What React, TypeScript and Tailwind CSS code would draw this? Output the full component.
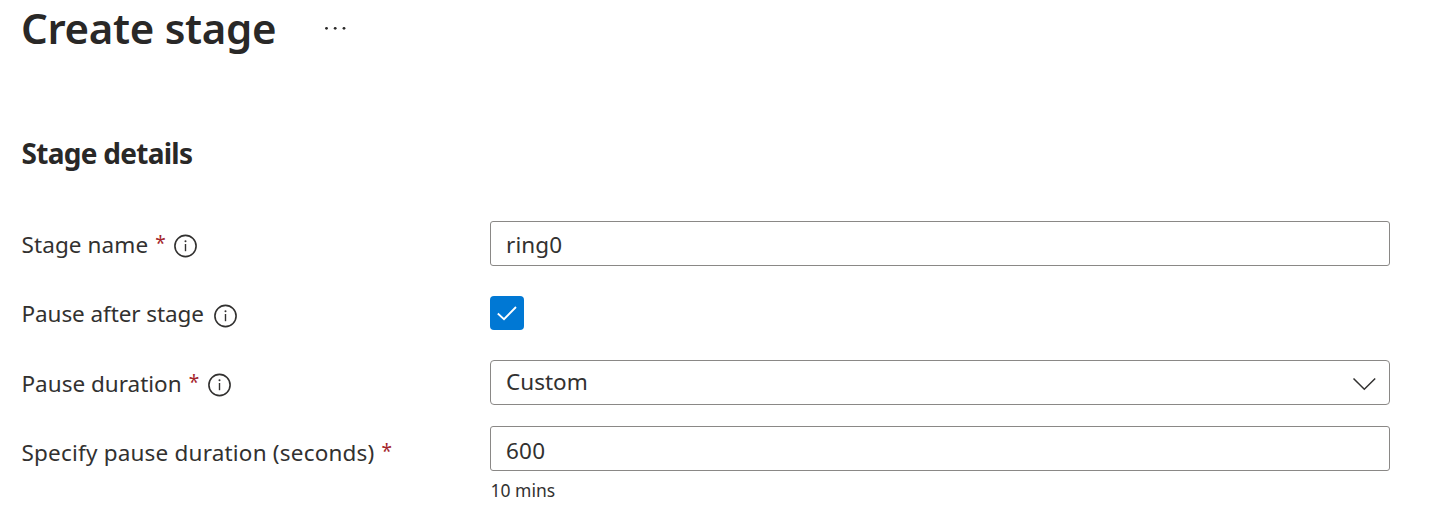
import React from "react";

function Info() {
  return (
    <svg width="24" height="24" viewBox="0 0 24 24" fill="none" className="mt-[3px] shrink-0">
      <circle cx="11.5" cy="12" r="10.6" stroke="#323130" strokeWidth="1.6" />
      <path d="M11.5 10V17.2" stroke="#323130" strokeWidth="1.4" />
      <circle cx="11.5" cy="7.3" r="1" fill="#323130" />
    </svg>
  );
}

type RowProps = {
  label: string;
  labelClass: string;
  rowClass: string;
  cellClass?: string;
  required?: boolean;
  info?: boolean;
  children: React.ReactNode;
};

function Row({ label, labelClass, rowClass, cellClass = "pt-[2px]", required, info, children }: RowProps) {
  return (
    <div className={`flex ${rowClass}`}>
      <div className={`-ml-[0.5px] flex w-[468.5px] shrink-0 items-center whitespace-nowrap ${cellClass}`}>
        <span className={labelClass}>{label}</span>
        {required && <span className="mr-[9px] -mt-[3px] w-[10px] text-[19px] text-[#a4262c]">*</span>}
        {info && <Info />}
      </div>
      {children}
    </div>
  );
}

export default function App() {
  return (
    <main className="h-[532px] overflow-hidden bg-white pl-[22px] font-['Noto_Sans',sans-serif] text-[22.5px] leading-[34px] text-[#323130]">
      <header className="flex h-[135px] items-start text-[#292827]">
        <h1 className="-ml-[1px] w-[302px] text-[42px] leading-[56px] font-semibold tracking-[-0.32px]">Create stage</h1>
        <svg width="24" height="4" viewBox="0 0 24 4" fill="#292827" className="mt-[26px]">
          <circle cx="3.5" cy="2.3" r="1.4" />
          <circle cx="12.2" cy="2.3" r="1.4" />
          <circle cx="21" cy="2.3" r="1.4" />
        </svg>
      </header>
      <h2 className="-ml-[0.5px] mb-[50px] text-[28px] leading-[36px] font-bold tracking-[-0.72px] text-[#292827]">Stage details</h2>

      <Row label="Stage name" labelClass="mr-[7px] tracking-[0.1px]" rowClass="h-[45px]" required info>
        <div className="w-[900px] rounded-[3px] border border-[#8a8886] pt-[6px] pl-[15px] tracking-[0.1px]">ring0</div>
      </Row>
      <Row label="Pause after stage" labelClass="mr-[10px] tracking-[-0.08px]" rowClass="mt-[30px] h-[34px]" info>
        <div className="flex h-[34px] w-[34px] items-center justify-center rounded-[4px] bg-[#0078d4]">
          <svg width="22" height="18" viewBox="0 0 22 18" fill="none">
            <path d="M1.8 9.5L8 15.2L20 3" stroke="white" strokeWidth="1.8" />
          </svg>
        </div>
      </Row>
      <Row label="Pause duration" labelClass="mr-[7px]" rowClass="mt-[30px] h-[45px]" required info>
        <div className="flex w-[900px] justify-between rounded-[4px] border border-[#8a8886] pt-[4px] pr-[12px] pl-[15px]">
          <span>Custom</span>
          <svg width="25" height="16" viewBox="0 0 25 16" fill="none" className="mt-[11px]">
            <path d="M1.5 2.5L12.3 13.3L23.2 2.5" stroke="#323130" strokeWidth="1.5" />
          </svg>
        </div>
      </Row>
      <Row
        label="Specify pause duration (seconds)"
        labelClass="mr-[7px] tracking-[0.2px]"
        rowClass="mt-[21px] h-[45px]"
        cellClass="pt-[8px]"
        required
      >
        <div className="w-[900px] rounded-[3px] border border-[#8a8886] pt-[7px] pl-[15px] tracking-[0.2px]">600</div>
      </Row>
      <p className="mt-[6px] ml-[468.5px] text-[17.5px] leading-[26px]">10 mins</p>
    </main>
  );
}
